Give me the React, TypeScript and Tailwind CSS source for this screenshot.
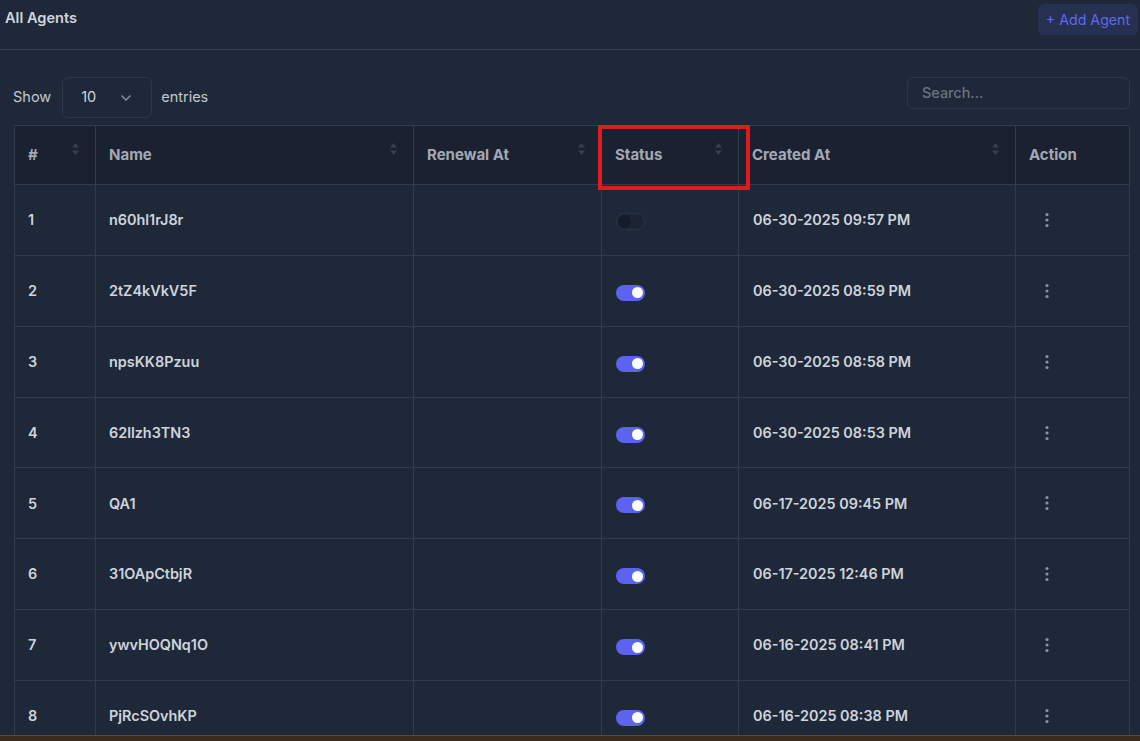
import React from 'react';

interface Agent {
  id: number;
  name: string;
  active: boolean;
  createdAt: string;
}

const agents: Agent[] = [
  { id: 1, name: 'n60hl1rJ8r', active: false, createdAt: '06-30-2025 09:57 PM' },
  { id: 2, name: '2tZ4kVkV5F', active: true, createdAt: '06-30-2025 08:59 PM' },
  { id: 3, name: 'npsKK8Pzuu', active: true, createdAt: '06-30-2025 08:58 PM' },
  { id: 4, name: '62llzh3TN3', active: true, createdAt: '06-30-2025 08:53 PM' },
  { id: 5, name: 'QA1', active: true, createdAt: '06-17-2025 09:45 PM' },
  { id: 6, name: '31OApCtbjR', active: true, createdAt: '06-17-2025 12:46 PM' },
  { id: 7, name: 'ywvHOQNq1O', active: true, createdAt: '06-16-2025 08:41 PM' },
  { id: 8, name: 'PjRcSOvhKP', active: true, createdAt: '06-16-2025 08:38 PM' },
];

const SortIcon = () => (
  <svg width="9" height="14" viewBox="0 0 9 14" className="shrink-0">
    <path d="M4.5 1 L8 5.5 H1 Z" fill="#374151" />
    <path d="M4.5 13 L8 8.5 H1 Z" fill="#374151" />
  </svg>
);

const Toggle = ({ on }: { on: boolean }) =>
  on ? (
    <div className="w-[29px] h-[16px] rounded-full bg-[#5b63f0] flex items-center justify-end pr-[2px]">
      <div className="w-[11px] h-[11px] rounded-full bg-white" />
    </div>
  ) : (
    <div className="w-[29px] h-[17px] rounded-full bg-[#1c2434] border border-[#2b3444] flex items-center pl-[1px]">
      <div className="w-[13px] h-[13px] rounded-full bg-[#141b29]" />
    </div>
  );

const Kebab = () => (
  <svg width="4" height="16" viewBox="0 0 4 16">
    <circle cx="2" cy="2.5" r="1.6" fill="#8b93a1" />
    <circle cx="2" cy="8" r="1.6" fill="#8b93a1" />
    <circle cx="2" cy="13.5" r="1.6" fill="#8b93a1" />
  </svg>
);

const cols = [
  { label: '#', w: 'w-[81px]', sort: true },
  { label: 'Name', w: 'w-[318px]', sort: true },
  { label: 'Renewal At', w: 'w-[188px]', sort: true },
  { label: 'Status', w: 'w-[137px]', sort: true },
  { label: 'Created At', w: 'w-[277px]', sort: true },
  { label: 'Action', w: 'w-[114px]', sort: false },
];

export default function App() {
  return (
    <div
      className="min-h-screen bg-[#1e2839] text-[#d1d5db] relative"
      style={{ fontFamily: 'Inter, "Liberation Sans", sans-serif' }}
    >
      {/* Top bar */}
      <div className="h-[50px] border-b border-[#374151] flex items-start justify-between pl-[5px] pr-[2px]">
        <h1 className="text-[14.6px] font-semibold text-[#d1d5db] mt-[8px]">All Agents</h1>
        <button className="mt-[4px] h-[31px] w-[100px] rounded-md bg-[#263050] text-[#6168f2] text-[14.2px]">
          + Add Agent
        </button>
      </div>

      {/* Controls */}
      <div className="flex items-center justify-between pl-[13px] pr-[10px] mt-[27px]">
        <div className="flex items-center text-[14.5px] text-[#c3c8d0]">
          <span className="-mt-[2px]">Show</span>
          <div className="ml-[11px] w-[90px] h-[41px] rounded-md border border-[#2e3747] flex items-center justify-between pl-[18px] pr-[19px] text-[#d1d5db]">
            <span className="-mt-[2px]">10</span>
            <svg width="12" height="8" viewBox="0 0 12 8">
              <path d="M1.5 1.5 L6 6 L10.5 1.5" stroke="#8b93a1" strokeWidth="1.4" fill="none" />
            </svg>
          </div>
          <span className="ml-[9px] -mt-[2px]">entries</span>
        </div>
        <div className="w-[223px] h-[32px] mb-[9px] rounded-md border border-[#2e3747] flex items-center pl-[14px] text-[14.4px] text-[#6b7280] font-medium">
          <span>Search...</span>
        </div>
      </div>

      {/* Table */}
      <div className="ml-[14px] mt-[7px] w-[1115px] border-l border-t border-[#323c4d]">
        <div className="flex h-[59px] bg-[#1a2130]">
          {cols.map((c) => (
            <div
              key={c.label}
              className={`${c.w} shrink-0 border-r border-b border-[#323c4d] flex items-start justify-between pl-[13px] pr-[15px] pt-[18px]`}
            >
              <span className="text-[15px] font-bold text-[#a3a9b4]">{c.label}</span>
              {c.sort && (
                <div className="-mt-[2px]">
                  <SortIcon />
                </div>
              )}
            </div>
          ))}
        </div>
        {agents.map((a) => (
          <div key={a.id} className="flex h-[70.86px] text-[14.4px] font-semibold text-[#cfd4db]">
            <div className="w-[81px] shrink-0 border-r border-b border-[#323c4d] flex items-center pl-[13px]">
              {a.id}
            </div>
            <div className="w-[318px] shrink-0 border-r border-b border-[#323c4d] flex items-center pl-[13px]">
              {a.name}
            </div>
            <div className="w-[188px] shrink-0 border-r border-b border-[#323c4d]" />
            <div className="w-[137px] shrink-0 border-r border-b border-[#323c4d] flex items-center pl-[14px] pt-[4px]">
              <Toggle on={a.active} />
            </div>
            <div className="w-[277px] shrink-0 border-r border-b border-[#323c4d] flex items-center pl-[14px]">
              {a.createdAt}
            </div>
            <div className="w-[114px] shrink-0 border-r border-b border-[#323c4d] flex items-center pl-[29px]">
              <Kebab />
            </div>
          </div>
        ))}
      </div>

      {/* Highlight annotation */}
      <div className="absolute left-[598px] top-[125px] w-[152px] h-[65px] border-[4px] border-[#e01b1b] pointer-events-none" />

      {/* Bottom strip */}
      <div className="fixed left-0 right-0 bottom-0 h-[6px] bg-[#3b2b1f] border-t border-[#5a4a3a]" />
    </div>
  );
}
